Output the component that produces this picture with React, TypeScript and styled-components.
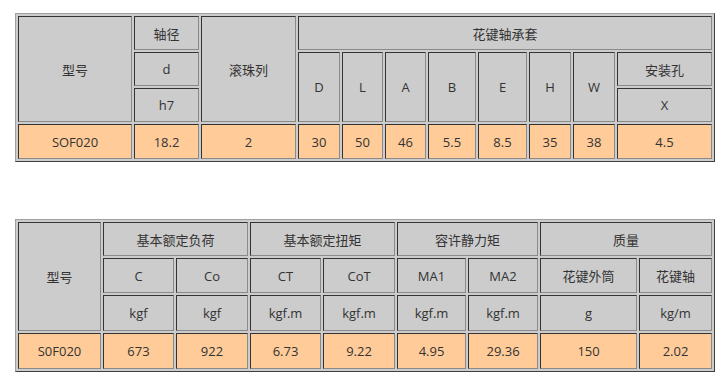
import styled, { createGlobalStyle } from "styled-components";

const GlobalStyle = createGlobalStyle`
  body {
    margin: 0;
    background: #fff;
    font-family: "Open Sans", "Noto Sans CJK SC", sans-serif;
    font-size: 13px;
    color: #333;
  }
`;

const Page = styled.div`
  padding: 13px 0 0 15px;
`;

const Table = styled.table<{ $gap?: number }>`
  width: 700px;
  table-layout: fixed;
  border-collapse: separate;
  border-spacing: 2px;
  background: #cccccc;
  border-style: solid;
  border-width: 1px;
  border-color: #a0a0a0 #404040 #404040 #a0a0a0;
  margin-bottom: ${(p) => p.$gap ?? 0}px;
`;

const Cell = styled.td<{ $data?: boolean; $h?: number }>`
  box-sizing: border-box;
  height: ${(p) => p.$h ?? 34}px;
  padding: 0;
  text-align: center;
  vertical-align: middle;
  background: ${(p) => (p.$data ? "#ffcc99" : "#cccccc")};
  border-style: solid;
  border-width: 1px;
  border-color: #333 #8a8a8a #8a8a8a #333;
  color: #333;
  white-space: nowrap;
`;

const specCols = [114, 65, 95, 42, 41, 41, 48, 49, 42, 42, 95];
const loadCols = [83, 71, 72, 71, 72, 69, 70, 97, 73];

function Cols({ widths }: { widths: number[] }) {
  return (
    <colgroup>
      {widths.map((w, i) => (
        <col key={i} style={{ width: w }} />
      ))}
    </colgroup>
  );
}

export default function App() {
  const dims = ["D", "L", "A", "B", "E", "H", "W"];
  const dimVals = ["30", "50", "46", "5.5", "8.5", "35", "38"];
  const loadData = ["S0F020", "673", "922", "6.73", "9.22", "4.95", "29.36", "150", "2.02"];

  return (
    <>
      <GlobalStyle />
      <Page>
        <Table $gap={57}>
          <Cols widths={specCols} />
          <tbody>
            <tr>
              <Cell rowSpan={3}>型号</Cell>
              <Cell>轴径</Cell>
              <Cell rowSpan={3}>滚珠列</Cell>
              <Cell colSpan={8}>花键轴承套</Cell>
            </tr>
            <tr>
              <Cell>d</Cell>
              {dims.map((d) => (
                <Cell key={d} rowSpan={2}>
                  {d}
                </Cell>
              ))}
              <Cell>安装孔</Cell>
            </tr>
            <tr>
              <Cell>h7</Cell>
              <Cell>X</Cell>
            </tr>
            <tr>
              <Cell $data $h={35}>SOF020</Cell>
              <Cell $data $h={35}>18.2</Cell>
              <Cell $data $h={35}>2</Cell>
              {dimVals.map((v, i) => (
                <Cell key={i} $data $h={35}>
                  {v}
                </Cell>
              ))}
              <Cell $data $h={35}>4.5</Cell>
            </tr>
          </tbody>
        </Table>

        <Table>
          <Cols widths={loadCols} />
          <tbody>
            <tr>
              <Cell rowSpan={3}>型号</Cell>
              <Cell colSpan={2}>基本额定负荷</Cell>
              <Cell colSpan={2}>基本额定扭矩</Cell>
              <Cell colSpan={2}>容许静力矩</Cell>
              <Cell colSpan={2}>质量</Cell>
            </tr>
            <tr>
              <Cell $h={35}>C</Cell>
              <Cell $h={35}>Co</Cell>
              <Cell $h={35}>CT</Cell>
              <Cell $h={35}>CoT</Cell>
              <Cell $h={35}>MA1</Cell>
              <Cell $h={35}>MA2</Cell>
              <Cell $h={35}>花键外筒</Cell>
              <Cell $h={35}>花键轴</Cell>
            </tr>
            <tr>
              {["kgf", "kgf", "kgf.m", "kgf.m", "kgf.m", "kgf.m", "g", "kg/m"].map((u, i) => (
                <Cell key={i} $h={36}>
                  {u}
                </Cell>
              ))}
            </tr>
            <tr>
              {loadData.map((v, i) => (
                <Cell key={i} $data $h={36}>
                  {v}
                </Cell>
              ))}
            </tr>
          </tbody>
        </Table>
      </Page>
    </>
  );
}
